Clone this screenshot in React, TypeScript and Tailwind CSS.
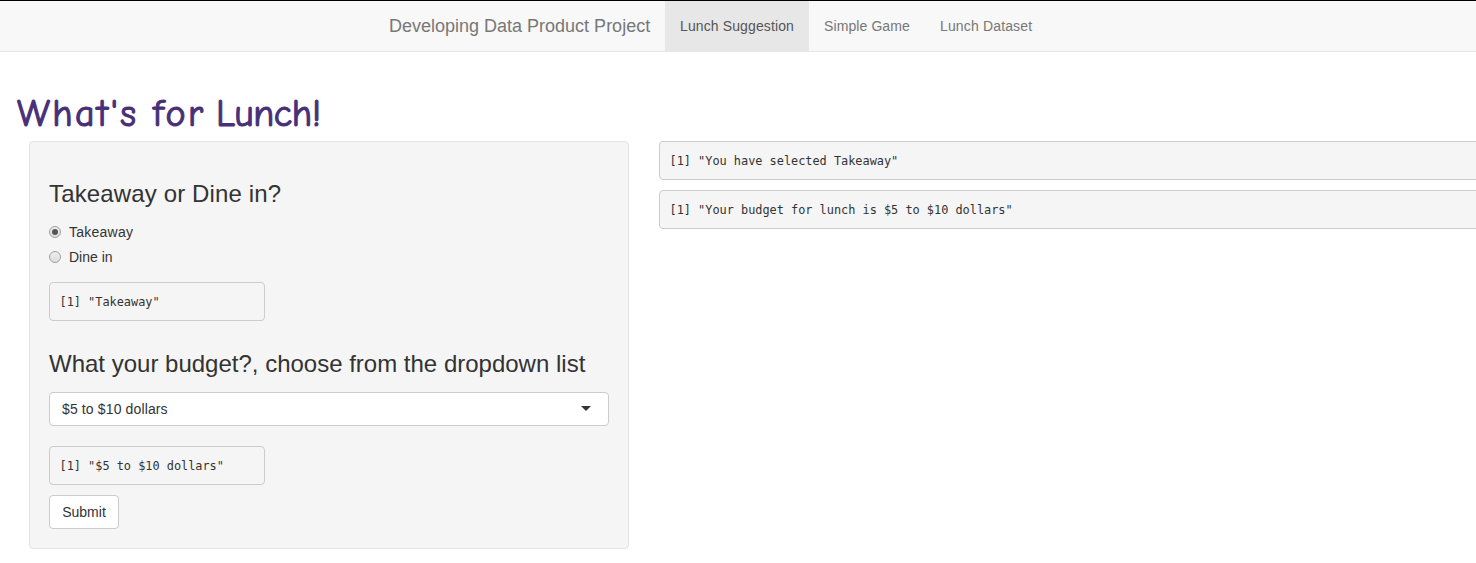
import React from "react";

function Output({ children, className = "" }: { children: React.ReactNode; className?: string }) {
  return (
    <pre className={`h-[39px] rounded border border-[#ccc] bg-[#f5f5f5] px-[9.5px] pt-[9.5px] font-['DejaVu_Sans_Mono',monospace] text-[11.9px] leading-[18.5px] tracking-[-0.01px] text-[#333] ${className}`}>{children}</pre>
  );
}

function Radio({ label, checked = false, className = "" }: { label: string; checked?: boolean; className?: string }) {
  return (
    <label className="flex h-[25px] items-center gap-2">
      <span className="flex size-3 items-center justify-center rounded-full border border-[#a0a0a0] bg-linear-to-b from-[#eee] to-[#ddd]">
        {checked && <span className="size-1.5 rounded-full bg-[#555]" />}
      </span>
      <span className={className}>{label}</span>
    </label>
  );
}

export default function App() {
  return (
    <div className="h-[563px] w-full overflow-hidden bg-white font-['Liberation_Sans',Arial,sans-serif] text-sm text-[#333]">
      <nav className="flex h-[52px] border-t border-b border-t-black border-b-[#e7e7e7] bg-[#f8f8f8] pl-[374px] leading-[50px] text-[#777]">
        <span className="w-[291px] px-[15px] text-lg leading-[50px] whitespace-nowrap">Developing Data Product Project</span>
        <a className="w-[144px] bg-[#e7e7e7] px-[15px] tracking-[0.12px] whitespace-nowrap text-[#555]">Lunch Suggestion</a>
        <a className="w-[116px] px-[15px] tracking-[0.1px] whitespace-nowrap">Simple Game</a>
        <a className="px-[15px] tracking-[0.15px] whitespace-nowrap">Lunch Dataset</a>
      </nav>
      <h1 className="mt-[41px] flex h-12 pl-[17px] font-['Comic_Sans_MS','Comic_Neue',cursive] text-[38px] leading-[42px] whitespace-nowrap text-[#483078] [-webkit-text-stroke:1.1px_#483078]">
        <span className="w-[136px] tracking-[2.4px]">What's </span>
        <span className="w-[63px] tracking-[2.5px]">for </span>
        <span className="tracking-[-0.4px]">Lunch!</span>
      </h1>
      <main className="flex gap-[30px] pl-[29px]">
        <section className="h-[408px] w-[600px] shrink-0 rounded border border-[#e3e3e3] bg-[#f5f5f5] px-[19px] pt-[39px]">
          <h3 className="text-2xl leading-[26px] tracking-[0.14px]">Takeaway or Dine in?</h3>
          <div className="mt-3 h-[63px]">
            <Radio label="Takeaway" checked className="tracking-[0.25px]" />
            <Radio label="Dine in" />
          </div>
          <Output className="w-[216px]">[1] "Takeaway"</Output>
          <h3 className="mt-[30px] text-2xl leading-[26px] whitespace-nowrap">What your budget?, choose from the dropdown list</h3>
          <div className="mt-[15px] flex h-[34px] items-center justify-between rounded border border-[#ccc] bg-white pr-[17px] pb-px pl-3">
            <span className="tracking-[0.13px]">$5 to $10 dollars</span>
            <svg width="10" height="5"><path d="M0 0h10L5 5z" fill="#333" /></svg>
          </div>
          <Output className="mt-5 w-[216px]">[1] "$5 to $10 dollars"</Output>
          <button className="mt-2.5 block h-[34px] w-[70px] rounded border border-[#ccc] bg-white">Submit</button>
        </section>
        <section className="flex h-[88px] w-[840px] shrink-0 flex-col gap-2.5">
          <Output>[1] "You have selected Takeaway"</Output>
          <Output>[1] "Your budget for lunch is $5 to $10 dollars"</Output>
        </section>
      </main>
    </div>
  );
}
